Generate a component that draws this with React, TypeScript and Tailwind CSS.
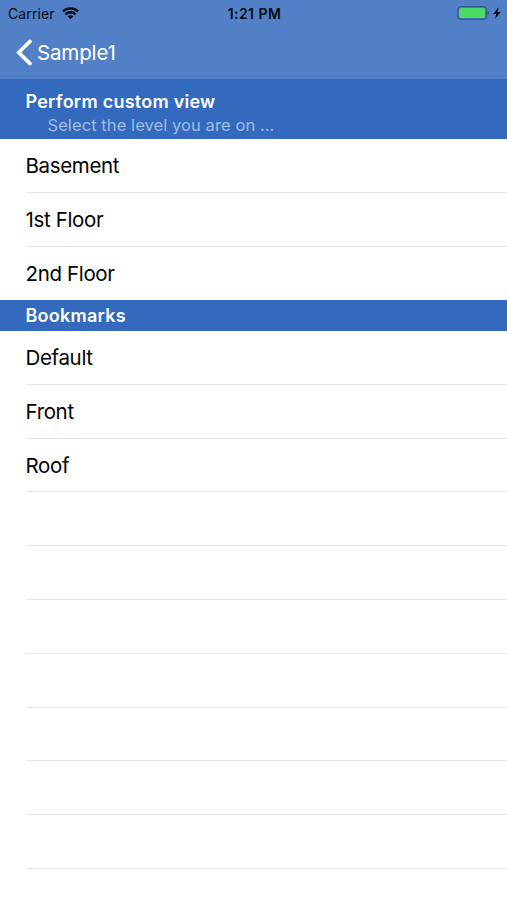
const floors = ["Basement", "1st Floor", "2nd Floor"];
const bookmarks = ["Default", "Front", "Roof"];
const emptyRows = Array.from({ length: 8 }, () => "");

function StatusBar() {
  return (
    <div className="grid h-[27px] grid-cols-3 items-center pl-[8px] pr-[6px] text-[14px] text-[#060b14]">
      <div className="flex items-center gap-[7px]">
        <span className="pb-px tracking-[0.1px]">Carrier</span>
        <svg className="mb-px" width="17" height="12" viewBox="0 0 17 12" fill="none" stroke="currentColor" strokeWidth="2.4">
          <path d="M0.8 4.4C5.2 0.3 11.8 0.3 16.2 4.4" />
          <path d="M3.4 7.3C6.3 4.6 10.7 4.6 13.6 7.3" />
          <path d="M8.5 12L5.6 9.4C7.2 8 9.8 8 11.4 9.4Z" fill="currentColor" stroke="none" />
        </svg>
      </div>
      <span className="pb-px text-center font-semibold tracking-[0.45px]">1:21 PM</span>
      <div className="flex items-center justify-end gap-[3px] pb-px">
        <svg width="33" height="14" viewBox="0 0 33 14">
          <rect x="0.9" y="0.7" width="28.4" height="12.6" rx="3" fill="none" stroke="#31527f" strokeWidth="1.1" />
          <rect x="2.2" y="2" width="25.8" height="10" rx="1.6" fill="#4cd964" />
          <path d="M30.6 4.8C32.6 5.5 32.6 8.5 30.6 9.2Z" fill="#31527f" />
        </svg>
        <svg width="8" height="12" viewBox="0 0 8 12" fill="currentColor">
          <path d="M5.6 0.2L0.2 6.9H3.3L2.2 11.8L7.8 4.9H4.6Z" />
        </svg>
      </div>
    </div>
  );
}

function Row({ label }: { label: string }) {
  return (
    <li className="flex h-[53.8px] items-center border-b border-[#e6e6e8] pt-[2px] text-[20.5px] tracking-[-0.35px] last:border-transparent">
      {label}
    </li>
  );
}

function List({ items }: { items: string[] }) {
  return (
    <ul className="pl-[25.5px]">
      {items.map((item, i) => (
        <Row key={i} label={item} />
      ))}
    </ul>
  );
}

export default function App() {
  return (
    <div className="h-[900px] w-full overflow-hidden bg-white font-['Inter',sans-serif] text-black">
      <header className="h-[79px] bg-[#5180c7]">
        <StatusBar />
        <button className="flex h-[51px] items-center gap-[4px] pl-4 text-[20.5px] tracking-[-0.15px] text-white">
          <svg width="17" height="27" viewBox="0 0 17 27" fill="none" stroke="currentColor" strokeWidth="3.6" strokeLinecap="round">
            <path d="M14 2.4L2.8 13.5L14 24.6" />
          </svg>
          <span className="pt-[2px]">Sample1</span>
        </button>
      </header>

      <section>
        <div className="h-[60px] bg-[#336abe] pl-[25.5px] pt-[10px]">
          <h2 className="text-[18px] font-semibold leading-[25px] tracking-[0.25px] text-white">Perform custom view</h2>
          <p className="pl-[22px] text-[16.5px] leading-[23px] tracking-[0.08px] text-[#a1bbe3]">
            Select the level you are on ...
          </p>
        </div>
        <List items={floors} />
      </section>

      <section>
        <div className="flex h-[30.6px] items-center bg-[#336abe] pl-[25.5px]">
          <h2 className="text-[18px] font-semibold tracking-[0.25px] text-white">Bookmarks</h2>
        </div>
        <List items={[...bookmarks, ...emptyRows]} />
      </section>
    </div>
  );
}
